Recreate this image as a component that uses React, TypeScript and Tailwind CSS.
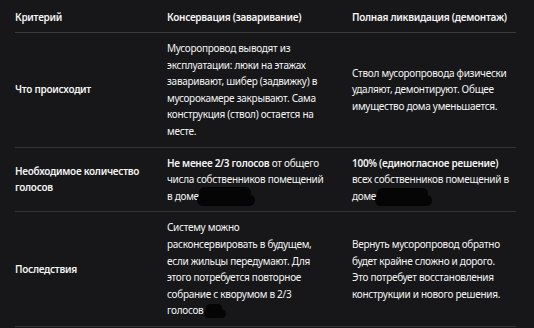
import React from 'react';

type Cell = React.ReactNode;

// Black marker scribble that hides part of a cell
function Scribble({ w, h, dx = 0, dy = 0 }: { w: number; h: number; dx?: number; dy?: number }) {
  return (
    <span className="relative inline-block align-baseline" style={{ width: w }}>
      <svg
        width={w}
        height={h}
        viewBox={`0 0 ${w} ${h}`}
        className="absolute"
        style={{ left: dx, top: dy - h / 2 }}
      >
        <rect x={2} y={0} width={w - 6} height={h * 0.62} rx={h * 0.3} fill="#050505" />
        <rect x={0} y={h * 0.38} width={w} height={h * 0.62} rx={h * 0.3} fill="#050505" />
      </svg>
    </span>
  );
}

const rows: { label: Cell; keep: Cell; remove: Cell }[] = [
  {
    label: 'Что происходит',
    keep: 'Мусоропровод выводят из эксплуатации: люки на этажах заваривают, шибер (задвижку) в мусорокамере закрывают. Сама конструкция (ствол) остается на месте.',
    remove: 'Ствол мусоропровода физически удаляют, демонтируют. Общее имущество дома уменьшается.',
  },
  {
    label: 'Необходимое количество голосов',
    keep: (
      <>
        <b className="font-semibold">Не менее 2/3 голосов</b> от общего числа собственников помещений в доме{' '}
        <Scribble w={58} h={19} dx={-4} dy={-3} />
      </>
    ),
    remove: (
      <>
        <b className="font-semibold">100% (единогласное решение)</b> всех собственников помещений в доме{' '}
        <Scribble w={57} h={18} dx={-3} dy={-3} />
      </>
    ),
  },
  {
    label: 'Последствия',
    keep: (
      <>
        Систему можно расконсервировать в будущем, если жильцы передумают. Для этого потребуется повторное собрание с
        кворумом в 2/3 голосов <Scribble w={22} h={14} dx={-2} dy={-3} />
      </>
    ),
    remove: 'Вернуть мусоропровод обратно будет крайне сложно и дорого. Это потребует восстановления конструкции и нового решения.',
  },
];

export default function App() {
  return (
    <div
      className="min-h-[328px] w-[534px] overflow-hidden bg-[#171719] pl-[15px] text-[10px] leading-[16.6px] tracking-[-0.28px] text-[#f4f4f4]"
      style={{ fontFamily: '"Noto Sans", "Open Sans", sans-serif' }}
    >
      <div className="w-[501px]">
        <div className="grid h-[33px] grid-cols-[152px_185px_164px] items-center border-b border-[#3a3a3c] pt-[2px] font-semibold">
          <div>Критерий</div>
          <div>Консервация (заваривание)</div>
          <div>Полная ликвидация (демонтаж)</div>
        </div>
        {rows.map((r, i) => (
          <div key={i} className="grid grid-cols-[152px_185px_164px] items-center border-b border-[#333335] py-[7px]">
            <div className="pr-[14px] font-semibold">{r.label}</div>
            <div className="pr-[24px]">{r.keep}</div>
            <div className="pr-[4px]">{r.remove}</div>
          </div>
        ))}
      </div>
    </div>
  );
}
